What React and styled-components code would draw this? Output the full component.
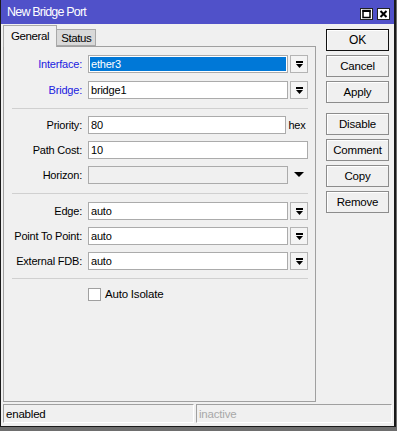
import styled, { createGlobalStyle } from 'styled-components';

const GlobalStyle = createGlobalStyle`
  html, body {
    margin: 0;
    padding: 0;
    background: #6e6e6e;
  }
  body {
    font-family: 'Liberation Sans', Arial, sans-serif;
    font-size: 11px;
    letter-spacing: -0.2px;
    color: #000;
  }
`;

const Window = styled.div`
  width: 396px;
  height: 427px;
  box-sizing: border-box;
  display: flex;
  flex-direction: column;
  background: #f0f0f0;
  border-left: 1px solid #1a1a1a;
  border-right: 2px solid #1a1a1a;
  border-bottom: 1px solid #1a1a1a;
`;

const TitleBar = styled.div`
  height: 24px;
  flex: none;
  display: flex;
  align-items: center;
  justify-content: space-between;
  padding: 0 4px 0 6px;
  background: #5051c9;
  color: #fff;
  font-size: 12.5px;
  letter-spacing: -0.8px;
`;

const TitleButtons = styled.div`
  display: flex;
  gap: 4px;
  margin-top: 3px;
`;

const Body = styled.div`
  flex: 1;
  display: flex;
  gap: 10px;
  padding: 1px 4px 0 2px;
  min-height: 0;
`;

const TabsBlock = styled.div`
  width: 313px;
  display: flex;
  flex-direction: column;
`;

const TabStrip = styled.div`
  height: 21px;
  display: flex;
  align-items: flex-end;
  position: relative;
  z-index: 1;
`;

const Tab = styled.div`
  box-sizing: border-box;
  height: ${(p) => (p.$active ? '22px' : '17px')};
  margin-bottom: ${(p) => (p.$active ? '-1px' : '0')};
  padding: ${(p) => (p.$active ? '4px 7px 0 7px' : '2px 4px 0 4px')};
  background: ${(p) => (p.$active ? '#f0f0f0' : '#d9d9d9')};
  border: 1px solid #a8a8a8;
  border-bottom: ${(p) => (p.$active ? 'none' : '1px solid #a8a8a8')};
  border-left: ${(p) => (p.$active ? '1px solid #a8a8a8' : 'none')};
  font-size: 11.5px;
  letter-spacing: -0.4px;
`;

const Panel = styled.div`
  flex: 1;
  border: 1px solid #a0a0a0;
  display: flex;
  flex-direction: column;
  padding-top: 8px;
`;

const Row = styled.div`
  display: grid;
  grid-template-columns: 80px 1fr;
  column-gap: 4px;
  align-items: center;
  height: 18px;
  padding-right: 7px;
  margin-top: ${(p) => p.$top || 0}px;
`;

const Label = styled.div`
  text-align: right;
  padding-right: 2px;
  white-space: nowrap;
  color: ${(p) => (p.$required ? '#2020e0' : '#000')};
`;

const Field = styled.div`
  display: flex;
  align-items: center;
  gap: ${(p) => p.$gap ?? 2}px;
  height: 18px;
`;

const Input = styled.div`
  box-sizing: border-box;
  flex: 1;
  height: 18px;
  line-height: 16px;
  padding: 0 2px;
  border: 1px solid #ababab;
  background: ${(p) => (p.$selected ? '#0078d7' : p.$disabled ? '#f0f0f0' : '#fff')};
  color: ${(p) => (p.$selected ? '#fff' : '#000')};
  box-shadow: ${(p) => (p.$selected ? 'inset 0 0 0 1px #fff' : 'none')};
  white-space: nowrap;
  overflow: hidden;
`;

const DropButton = styled.div`
  box-sizing: border-box;
  width: 18px;
  height: 18px;
  flex: none;
  display: flex;
  align-items: center;
  justify-content: center;
  border: 1px solid #b4b4b4;
  background: #f4f4f4;
`;

const Suffix = styled.span`
  width: 22px;
  flex: none;
  text-align: center;
`;

const PlainArrow = styled.div`
  width: 18px;
  flex: none;
  display: flex;
  justify-content: center;
  padding-left: 2px;
`;

const Separator = styled.div`
  height: 1px;
  background: #d0d0d0;
  margin: ${(p) => p.$top}px 7px ${(p) => p.$bottom}px 8px;
`;

const CheckWrap = styled.div`
  display: flex;
  align-items: center;
  gap: 4px;
  font-size: 11.5px;
`;

const CheckBox = styled.div`
  box-sizing: border-box;
  width: 13px;
  height: 13px;
  border: 1px solid #a0a0a0;
  background: #fff;
`;

const ButtonColumn = styled.div`
  width: 63px;
  display: flex;
  flex-direction: column;
  gap: 4px;
  margin-top: 4px;
`;

const Button = styled.div`
  box-sizing: border-box;
  height: 22px;
  display: flex;
  align-items: center;
  justify-content: center;
  background: #f0f0f0;
  border: 1px solid ${(p) => (p.$default ? '#111' : '#8c8c8c')};
  box-shadow: inset 1px 1px 0 #fff;
  font-size: ${(p) => (p.$default ? '12px' : '11.5px')};
  margin-top: ${(p) => p.$top || 0}px;
`;

const StatusBar = styled.div`
  flex: none;
  display: grid;
  grid-template-columns: 191px 1fr;
  gap: 2px;
  padding: 2px 2px 3px 2px;
`;

const StatusCell = styled.div`
  box-sizing: border-box;
  height: 19px;
  line-height: 18px;
  padding-left: 2px;
  border-top: 1px solid #a0a0a0;
  border-left: 1px solid #a0a0a0;
  border-right: 1px solid #fff;
  border-bottom: 1px solid #fff;
  color: ${(p) => (p.$muted ? '#a8a8a8' : '#000')};
  font-size: 11.5px;
`;

const DropIcon = () => (
  <svg width="9" height="9" viewBox="0 0 9 9">
    <rect x="1" y="1" width="7" height="2" fill="#000" />
    <polygon points="1,4 8,4 4.5,8" fill="#000" />
  </svg>
);

const MaxIcon = () => (
  <svg width="13" height="12" viewBox="0 0 13 12">
    <rect x="0.5" y="0.5" width="12" height="11" fill="#fff" stroke="#222" />
    <rect x="3" y="2.5" width="7" height="7" fill="none" stroke="#000" strokeWidth="1.5" />
    <rect x="2.5" y="2" width="8" height="2" fill="#000" />
  </svg>
);

const CloseIcon = () => (
  <svg width="13" height="12" viewBox="0 0 13 12">
    <rect x="0.5" y="0.5" width="12" height="11" fill="#fff" stroke="#222" />
    <path d="M3.5 3 L9.5 9 M9.5 3 L3.5 9" stroke="#000" strokeWidth="2" />
  </svg>
);

const SelectRow = ({ label, value, required, selected, top }) => (
  <Row $top={top}>
    <Label $required={required}>{label}:</Label>
    <Field>
      <Input $selected={selected}>{value}</Input>
      <DropButton>
        <DropIcon />
      </DropButton>
    </Field>
  </Row>
);

export default function App() {
  return (
    <>
      <GlobalStyle />
      <Window>
        <TitleBar>
          <span>New Bridge Port</span>
          <TitleButtons>
            <MaxIcon />
            <CloseIcon />
          </TitleButtons>
        </TitleBar>

        <Body>
          <TabsBlock>
            <TabStrip>
              <Tab $active>General</Tab>
              <Tab>Status</Tab>
            </TabStrip>
            <Panel>
              <SelectRow label="Interface" value="ether3" required selected />
              <SelectRow label="Bridge" value="bridge1" required top={8} />

              <Separator $top={9} $bottom={7} />

              <Row>
                <Label>Priority:</Label>
                <Field $gap={0}>
                  <Input>80</Input>
                  <Suffix>hex</Suffix>
                </Field>
              </Row>
              <Row $top={7}>
                <Label>Path Cost:</Label>
                <Field>
                  <Input>10</Input>
                </Field>
              </Row>
              <Row $top={7}>
                <Label>Horizon:</Label>
                <Field $gap={0}>
                  <Input $disabled />
                  <PlainArrow>
                    <svg width="10" height="6" viewBox="0 0 10 6">
                      <polygon points="0,0 10,0 5,5" fill="#000" />
                    </svg>
                  </PlainArrow>
                </Field>
              </Row>

              <Separator $top={9} $bottom={8} />

              <SelectRow label="Edge" value="auto" />
              <SelectRow label="Point To Point" value="auto" top={7} />
              <SelectRow label="External FDB" value="auto" top={7} />

              <Separator $top={8} $bottom={6} />

              <Row>
                <span />
                <CheckWrap>
                  <CheckBox />
                  <span>Auto Isolate</span>
                </CheckWrap>
              </Row>
            </Panel>
          </TabsBlock>

          <ButtonColumn>
            <Button $default>OK</Button>
            <Button>Cancel</Button>
            <Button>Apply</Button>
            <Button $top={6}>Disable</Button>
            <Button>Comment</Button>
            <Button>Copy</Button>
            <Button>Remove</Button>
          </ButtonColumn>
        </Body>

        <StatusBar>
          <StatusCell>enabled</StatusCell>
          <StatusCell $muted>inactive</StatusCell>
        </StatusBar>
      </Window>
    </>
  );
}
